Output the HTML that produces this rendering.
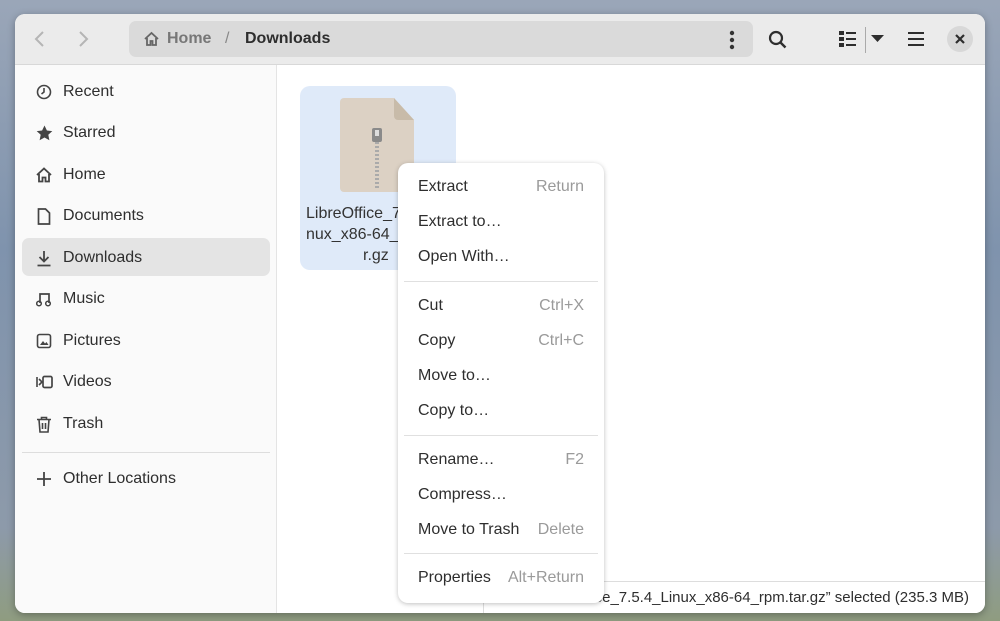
<!DOCTYPE html>
<html><head><meta charset="utf-8"><style>
*{margin:0;padding:0;box-sizing:border-box}
body{width:1000px;height:621px;overflow:hidden;position:relative;font-family:"Liberation Sans",sans-serif;color:#2e2e2e;
background:linear-gradient(180deg,#9aa6b8 0%,#7f93ad 40%,#8d9aaa 85%,#8f9c80 100%)}
.win{position:absolute;left:15px;top:14px;width:970px;height:599px;background:#fff;border-radius:10px;overflow:hidden;box-shadow:0 2px 8px rgba(0,0,0,.3)}
.hdr{position:absolute;left:0;top:0;width:970px;height:51px;background:#ebebeb;border-bottom:1px solid #d8d8d8}
.side{position:absolute;left:0;top:51px;width:262px;height:548px;background:#fafafa;border-right:1px solid #e4e4e4}
.path{position:absolute;left:114px;top:7px;width:624px;height:36px;background:#dadada;border-radius:7px}
.it{position:absolute;left:7px;width:248px;height:38px;border-radius:7px;font-size:16px;line-height:40px;padding-left:41px}
.it svg{position:absolute;left:14px;top:12px}
.menu{position:absolute;left:398px;top:163px;width:206px;height:440px;background:#fff;border-radius:10px;box-shadow:0 1px 5px rgba(0,0,0,.25)}
.m{position:absolute;left:20px;font-size:16px;color:#2e2e2e}
.k{position:absolute;right:20px;font-size:16px;color:#9a9a9a}
.sep{position:absolute;left:6px;width:194px;height:1px;background:#e0e0e0}
.fl{position:absolute;font-size:16px;color:#333;white-space:nowrap}
</style></head><body>
<div class="win">
<div class="hdr">
 <svg style="position:absolute;left:18px;top:16px" width="14" height="18"><path d="M10 2L3 9l7 7" stroke="#b5b5b5" stroke-width="2" fill="none"/></svg>
 <svg style="position:absolute;left:61px;top:16px" width="14" height="18"><path d="M4 2l7 7-7 7" stroke="#b5b5b5" stroke-width="2" fill="none"/></svg>
 <div class="path">
  <svg style="position:absolute;left:14px;top:10px" width="17" height="16"><path d="M2 8L8.5 2 15 8M4 7v7h3.5v-4h2v4H13V7" stroke="#666" stroke-width="1.8" fill="none"/></svg>
  <span style="position:absolute;left:38px;top:9px;font-size:16px;font-weight:bold;color:#777">Home</span>
  <span style="position:absolute;left:96px;top:9px;font-size:16px;color:#888">/</span>
  <span style="position:absolute;left:116px;top:9px;font-size:16px;font-weight:bold;color:#2e2e2e">Downloads</span>
  <svg style="position:absolute;left:600px;top:9px" width="6" height="20"><circle cx="3" cy="3" r="2.2" fill="#333"/><circle cx="3" cy="10" r="2.2" fill="#333"/><circle cx="3" cy="17" r="2.2" fill="#333"/></svg>
 </div>
 <svg style="position:absolute;left:753px;top:16px" width="20" height="20"><circle cx="8" cy="8" r="6" stroke="#2e2e2e" stroke-width="2.2" fill="none"/><path d="M12.5 12.5l5 5" stroke="#2e2e2e" stroke-width="2.4"/></svg>
 <svg style="position:absolute;left:824px;top:17px" width="18" height="16"><rect x="0" y="0" width="5" height="4" fill="#2e2e2e"/><rect x="0" y="6" width="5" height="4" fill="#2e2e2e"/><rect x="0" y="12" width="5" height="4" fill="#2e2e2e"/><path d="M7 2h10M7 8h10M7 14h10" stroke="#2e2e2e" stroke-width="2"/></svg>
 <div style="position:absolute;left:850px;top:13px;width:1px;height:26px;background:#aaa"></div>
 <svg style="position:absolute;left:856px;top:21px" width="14" height="9"><path d="M0 0h13L6.5 7z" fill="#2e2e2e"/></svg>
 <svg style="position:absolute;left:892px;top:17px" width="18" height="16"><path d="M1 2h16M1 8h16M1 14h16" stroke="#2e2e2e" stroke-width="2"/></svg>
 <div style="position:absolute;left:932px;top:12px;width:26px;height:26px;border-radius:13px;background:#d8d8d8"></div>
 <svg style="position:absolute;left:940px;top:20px" width="10" height="10"><path d="M1 1l8 8M9 1l-8 8" stroke="#2e2e2e" stroke-width="2.2"/></svg>
</div>
<div class="side">
 <div class="it" style="top:7px"><svg width="16" height="16"><circle cx="8" cy="8" r="6.5" stroke="#444" stroke-width="1.6" fill="none"/><path d="M8 4v4l-2.5 2" stroke="#444" stroke-width="1.6" fill="none"/></svg>Recent</div>
 <div class="it" style="top:48px"><svg width="17" height="16"><path d="M8.5 0.5l2.4 5 5.4.6-4 3.7 1.1 5.4-4.9-2.7-4.9 2.7 1.1-5.4-4-3.7 5.4-.6z" fill="#444"/></svg>Starred</div>
 <div class="it" style="top:90px"><svg width="16" height="16"><path d="M1 8L8 1.5 15 8M3 7v7.5h3.5v-4h3v4H13V7" stroke="#444" stroke-width="1.8" fill="none"/></svg>Home</div>
 <div class="it" style="top:131px"><svg width="16" height="17"><path d="M2.5 1h7l4 4v11h-11z" stroke="#444" stroke-width="1.7" fill="none"/></svg>Documents</div>
 <div class="it" style="top:173px;background:#e4e4e4"><svg width="16" height="17"><path d="M8 1v10M3.5 7L8 11.5 12.5 7M1.5 15.5h13" stroke="#444" stroke-width="1.8" fill="none"/></svg>Downloads</div>
 <div class="it" style="top:214px"><svg width="16" height="16"><path d="M4 12V3h9v9" stroke="#444" stroke-width="1.7" fill="none"/><circle cx="3" cy="12.5" r="2.3" stroke="#444" stroke-width="1.5" fill="none"/><circle cx="12" cy="12.5" r="2.3" stroke="#444" stroke-width="1.5" fill="none"/></svg>Music</div>
 <div class="it" style="top:256px"><svg width="16" height="16"><rect x="1.5" y="1.5" width="13" height="13" rx="2" stroke="#444" stroke-width="1.6" fill="none"/><path d="M4 12l3-4 2 2.5 1.5-1.5 2 3z" fill="#444"/></svg>Pictures</div>
 <div class="it" style="top:297px"><svg width="17" height="16"><path d="M1 3v10M3 5l3 3-3 3" stroke="#444" stroke-width="1.6" fill="none"/><rect x="7" y="2.5" width="9" height="11" rx="1.5" stroke="#444" stroke-width="1.7" fill="none"/></svg>Videos</div>
 <div class="it" style="top:339px"><svg width="16" height="17"><path d="M1 3.5h14M5.5 3.5V1.5h5v2M3 3.5l1 12.5h8l1-12.5M6.5 7v6M9.5 7v6" stroke="#444" stroke-width="1.6" fill="none"/></svg>Trash</div>
 <div style="position:absolute;left:7px;top:387px;width:248px;height:1px;background:#ddd"></div>
 <div class="it" style="top:394px"><svg width="16" height="16"><path d="M8 1v14M1 8h14" stroke="#444" stroke-width="1.8"/></svg>Other Locations</div>
</div>
<div style="position:absolute;left:285px;top:72px;width:156px;height:184px;background:#dfeaf9;border-radius:10px"></div>
<svg style="position:absolute;left:325px;top:84px" width="76" height="94"><path d="M4 0h50l20 22v68a4 4 0 0 1-4 4H4a4 4 0 0 1-4-4V4a4 4 0 0 1 4-4z" fill="#dcd1c4"/><path d="M54 0v18a4 4 0 0 0 4 4h16z" fill="#c8bba9"/><rect x="32" y="30" width="10" height="14" rx="2" fill="#8a8a8a"/><rect x="35" y="32" width="4" height="6" fill="#ddd"/><path d="M37 44v46" stroke="#aaa" stroke-width="4" stroke-dasharray="2 2"/></svg>
<div class="fl" style="left:291px;top:191px">LibreOffice_7.5</div>
<div class="fl" style="left:291px;top:212px">nux_x86-64_rpm</div>
<div class="fl" style="left:348px;top:233px">r.gz</div>
<div style="position:absolute;left:468px;top:567px;width:502px;height:32px;border-top:1px solid #ddd;border-left:1px solid #ddd;background:#fff"></div>
<div style="position:absolute;right:16px;top:575px;font-size:15px;color:#2e2e2e;white-space:nowrap">LibreOffice_7.5.4_Linux_x86-64_rpm.tar.gz” selected (235.3 MB)</div>
</div>
<div class="menu">
 <div class="m" style="top:15px">Extract</div><div class="k" style="top:15px">Return</div>
 <div class="m" style="top:50px">Extract to…</div>
 <div class="m" style="top:85px">Open With…</div>
 <div class="sep" style="top:118px"></div>
 <div class="m" style="top:134px">Cut</div><div class="k" style="top:134px">Ctrl+X</div>
 <div class="m" style="top:169px">Copy</div><div class="k" style="top:169px">Ctrl+C</div>
 <div class="m" style="top:204px">Move to…</div>
 <div class="m" style="top:239px">Copy to…</div>
 <div class="sep" style="top:272px"></div>
 <div class="m" style="top:288px">Rename…</div><div class="k" style="top:288px">F2</div>
 <div class="m" style="top:323px">Compress…</div>
 <div class="m" style="top:358px">Move to Trash</div><div class="k" style="top:358px">Delete</div>
 <div class="sep" style="top:390px"></div>
 <div class="m" style="top:406px">Properties</div><div class="k" style="top:406px">Alt+Return</div>
</div>
</body></html>
